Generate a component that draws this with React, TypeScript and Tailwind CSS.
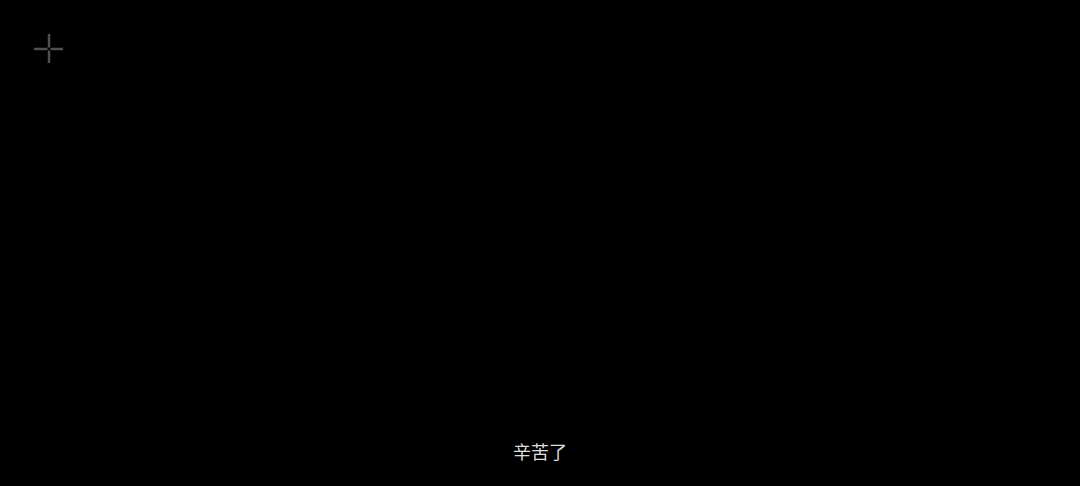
export default function App() {
  return (
    <div className="w-[1080px] h-[486px] bg-black flex flex-col justify-between overflow-hidden">
      <div className="pt-[34px] pl-[34px]">
        <svg width="30" height="30" viewBox="0 0 30 30" fill="none">
          <g stroke="#505050" strokeWidth="2.5">
            <line x1="0" y1="15" x2="13.5" y2="15" />
            <line x1="16.5" y1="15" x2="29" y2="15" />
            <line x1="15" y1="0" x2="15" y2="13.5" />
            <line x1="15" y1="16.5" x2="15" y2="29" />
          </g>
        </svg>
      </div>
      <div className="pb-[21px] text-center">
        <span
          className="text-[18px] leading-[22px] text-[#dedede]"
          style={{ fontFamily: '"Noto Sans CJK SC", "Noto Sans", sans-serif' }}
        >
          辛苦了
        </span>
      </div>
    </div>
  );
}
